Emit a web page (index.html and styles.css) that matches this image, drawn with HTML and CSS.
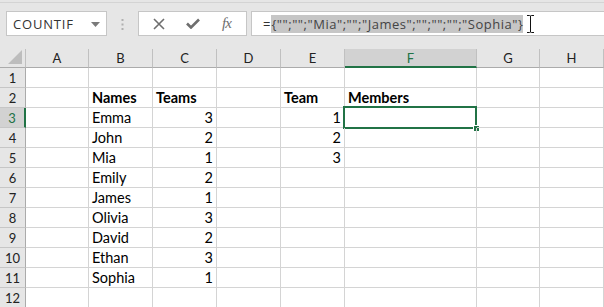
FILE: index.html
```html
<!DOCTYPE html>
<html>
<head>
<meta charset="utf-8">
<link rel="stylesheet" href="styles.css">
</head>
<body>
<div class="app">
  <div class="toolbar">
    <div class="namebox">
      <span class="name">COUNTIF</span>
      <svg class="drop" width="9" height="5" viewBox="0 0 9 5"><path d="M0 0H9L4.5 5Z" fill="#7a7a7a"/></svg>
    </div>
    <div class="grip">
      <svg width="3" height="11" viewBox="0 0 3 11"><rect x="0.5" y="0" width="2" height="2" fill="#b0b0b0"/><rect x="0.5" y="4.5" width="2" height="2" fill="#b0b0b0"/><rect x="0.5" y="9" width="2" height="2" fill="#b0b0b0"/></svg>
    </div>
    <div class="fbtns">
      <svg class="btn" width="12" height="12" viewBox="0 0 12 12"><path d="M1 1L11 11M11 1L1 11" stroke="#6e6e6e" stroke-width="1.6" fill="none"/></svg>
      <svg class="btn" width="14" height="11" viewBox="0 0 14 11"><path d="M1 5.5L5 9.5L13 1.5" stroke="#6e6e6e" stroke-width="2.6" fill="none"/></svg>
      <span class="fx">fx</span>
    </div>
    <div class="fbox">
      <span class="eq">=</span><span class="sel">{"";"";"Mia";"";"James";"";"";"";"Sophia"}</span>
      <svg class="ibeam" width="9" height="18" viewBox="0 0 9 18"><path d="M1 0.5H3.5M5.5 0.5H8M4.5 1V17M1 17.5H3.5M5.5 17.5H8M3.5 0.5Q4.5 0.5 4.5 1.5Q4.5 0.5 5.5 0.5M3.5 17.5Q4.5 17.5 4.5 16.5Q4.5 17.5 5.5 17.5" stroke="#111" stroke-width="1" fill="none"/></svg>
    </div>
  </div>
  <div class="sheet">
    <div class="ch corner"><svg width="14" height="14" viewBox="0 0 14 14"><path d="M14 0V14H0Z" fill="#bdbdbd"/></svg></div>
    <div class="ch">A</div><div class="ch">B</div><div class="ch">C</div><div class="ch">D</div><div class="ch">E</div><div class="ch active">F</div><div class="ch">G</div><div class="ch">H</div>

    <div class="rh">1</div><div class="c"></div><div class="c"></div><div class="c"></div><div class="c"></div><div class="c"></div><div class="c"></div><div class="c"></div><div class="c"></div>
    <div class="rh">2</div><div class="c"></div><div class="c b">Names</div><div class="c b">Teams</div><div class="c"></div><div class="c b">Team</div><div class="c b">Members</div><div class="c"></div><div class="c"></div>
    <div class="rh active">3</div><div class="c"></div><div class="c">Emma</div><div class="c n">3</div><div class="c"></div><div class="c n">1</div><div class="c sel-cell"><span class="handle"></span></div><div class="c"></div><div class="c"></div>
    <div class="rh">4</div><div class="c"></div><div class="c">John</div><div class="c n">2</div><div class="c"></div><div class="c n">2</div><div class="c"></div><div class="c"></div><div class="c"></div>
    <div class="rh">5</div><div class="c"></div><div class="c">Mia</div><div class="c n">1</div><div class="c"></div><div class="c n">3</div><div class="c"></div><div class="c"></div><div class="c"></div>
    <div class="rh">6</div><div class="c"></div><div class="c">Emily</div><div class="c n">2</div><div class="c"></div><div class="c"></div><div class="c"></div><div class="c"></div><div class="c"></div>
    <div class="rh">7</div><div class="c"></div><div class="c">James</div><div class="c n">1</div><div class="c"></div><div class="c"></div><div class="c"></div><div class="c"></div><div class="c"></div>
    <div class="rh">8</div><div class="c"></div><div class="c">Olivia</div><div class="c n">3</div><div class="c"></div><div class="c"></div><div class="c"></div><div class="c"></div><div class="c"></div>
    <div class="rh">9</div><div class="c"></div><div class="c">David</div><div class="c n">2</div><div class="c"></div><div class="c"></div><div class="c"></div><div class="c"></div><div class="c"></div>
    <div class="rh">10</div><div class="c"></div><div class="c">Ethan</div><div class="c n">3</div><div class="c"></div><div class="c"></div><div class="c"></div><div class="c"></div><div class="c"></div>
    <div class="rh">11</div><div class="c"></div><div class="c">Sophia</div><div class="c n">1</div><div class="c"></div><div class="c"></div><div class="c"></div><div class="c"></div><div class="c"></div>
    <div class="rh">12</div><div class="c"></div><div class="c"></div><div class="c"></div><div class="c"></div><div class="c"></div><div class="c"></div><div class="c"></div><div class="c"></div>
  </div>
</div>
</body>
</html>
```
FILE: styles.css
```css
* { box-sizing: border-box; }
html, body { margin: 0; padding: 0; }
body { background: #e6e6e6; width: 604px; height: 307px; overflow: hidden; font-family: Lato, "Open Sans", sans-serif; }

.toolbar {
  margin-top: 2px;
  border-top: 1px solid #d4d4d4;
  padding: 8px 0 11px 6px;
  display: flex;
  align-items: stretch;
  height: 47px;
}
.namebox {
  width: 101px;
  height: 25px;
  background: #fff;
  border: 1px solid #c6c6c6;
  display: flex;
  align-items: center;
  justify-content: space-between;
  padding: 0 6px 0 6px;
}
.name { font-family: "Open Sans", sans-serif; font-size: 13px; color: #333; letter-spacing: 0.8px; }
.drop { margin-top: 1px; }
.grip { width: 31px; display: flex; align-items: center; justify-content: center; }
.fbtns {
  width: 109px;
  height: 25px;
  background: #fff;
  border: 1px solid #c6c6c6;
  display: flex;
  align-items: center;
  padding-left: 14px;
  gap: 21px;
}
.fx { font-family: "Liberation Serif", serif; font-style: italic; font-size: 15px; color: #6e6e6e; margin-left: 1px; letter-spacing: -1px; }
.fbox {
  flex: 1;
  height: 25px;
  margin-left: 4px;
  background: #fff;
  border: 1px solid #c6c6c6;
  border-right: none;
  display: flex;
  align-items: center;
  padding-left: 11px;
  font-family: "Open Sans", sans-serif;
  font-size: 13px;
  color: #333;
}
.eq { padding-right: 1px; }
.sel { background: #c6c6c6; color: #444; line-height: 18px; letter-spacing: 0.52px; }
.ibeam { margin-left: 3px; }

.sheet {
  display: grid;
  grid-template-columns: 26px 63px 64px 64px 64px 64px 132px 63px 64px;
  grid-template-rows: 19px repeat(12, 20px);
  background: #fff;
}
.ch {
  background: #e6e6e6;
  border-right: 1px solid #c0c0c0;
  border-bottom: 1px solid #ababab;
  font-size: 13px;
  color: #222;
  text-align: center;
  line-height: 18px;
}
.corner { display: flex; align-items: flex-end; justify-content: flex-end; padding: 0 3px 3px 0; }
.ch.active { background: #d2d2d2; border-bottom: 2px solid #217346; color: #217346; }
.rh {
  background: #e6e6e6;
  border-right: 1px solid #ababab;
  border-bottom: 1px solid #c6c6c6;
  font-size: 13px;
  color: #222;
  text-align: center;
  line-height: 21px;
}
.rh.active { background: #d2d2d2; border-right: 2px solid #217346; color: #217346; }
.c {
  border-right: 1px solid #d4d4d4;
  border-bottom: 1px solid #d4d4d4;
  font-size: 14.5px;
  line-height: 19px;
  padding: 0 3px;
  color: #000;
  white-space: nowrap;
  position: relative;
}
.b { font-weight: bold; }
.n { text-align: right; }
.sel-cell::before {
  content: "";
  position: absolute;
  left: -2px; top: -2px; right: -1px; bottom: -2px;
  border: 2px solid #217346;
}
.handle {
  position: absolute;
  right: -3px; bottom: -4px;
  width: 6px; height: 6px;
  background: #217346;
  border: 1px solid #fff;
  border-right: none; border-bottom: none;
}
```
